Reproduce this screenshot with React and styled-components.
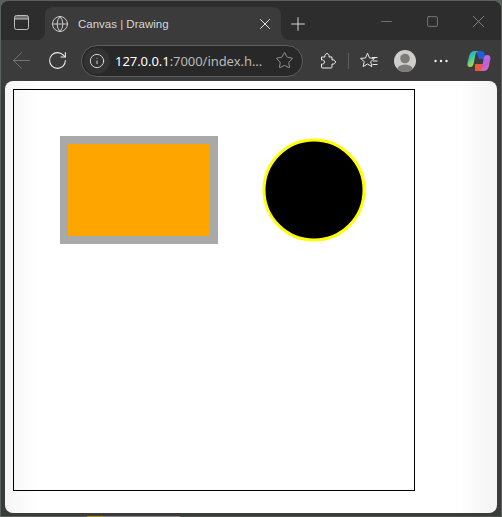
import React from "react"
import styled, { createGlobalStyle } from "styled-components"
import { ArrowLeft, Globe, Info, Minus, Plus, RotateCw, Square, Star, X } from "lucide-react"

const GlobalStyle = createGlobalStyle`
  html, body {
    margin: 0;
    background: #59635e;
  }
`

export default function App() {
  return (
    <Desktop>
      <GlobalStyle />
      <Win>
        <TabStrip>
          <LeftCap>
            <TabActionsIcon />
          </LeftCap>
          <Tab>
            <Globe size={18} strokeWidth={1.2} color="#d8d8d8" />
            <TabTitle>Canvas | Drawing</TabTitle>
            <X size={18} strokeWidth={1.3} color="#e8e8e8" />
          </Tab>
          <RightCap>
            <NewTab>
              <Plus size={22} strokeWidth={1} color="#e6e6e6" />
            </NewTab>
            <WinButtons>
              <WinButton>
                <Minus size={17} strokeWidth={1} color="#8d8d8d" />
              </WinButton>
              <WinButton>
                <Square size={13} strokeWidth={1.4} color="#8d8d8d" />
              </WinButton>
              <WinButton>
                <X size={21} strokeWidth={1} color="#8d8d8d" />
              </WinButton>
            </WinButtons>
          </RightCap>
        </TabStrip>

        <Toolbar>
          <ToolSlot>
            <ArrowLeft size={27} strokeWidth={0.8} color="#7b7b7b" />
          </ToolSlot>
          <ToolSlot>
            <RotateCw size={21} strokeWidth={1.2} color="#f0f0f0" />
          </ToolSlot>
          <Omnibox>
            <InfoBadge>
              <Info size={16} strokeWidth={1.4} color="#e0e0e0" />
            </InfoBadge>
            <Url>
              <Host>127.0.0.1</Host>:7000/index.h...
            </Url>
            <Star size={19} strokeWidth={0.9} color="#bcbcbc" />
          </Omnibox>
          <ExtensionSlot>
            <PuzzleIcon />
          </ExtensionSlot>
          <Divider />
          <ToolSlot>
            <FavouritesIcon />
          </ToolSlot>
          <ToolSlot>
            <ProfileIcon />
          </ToolSlot>
          <ToolSlot>
            <DotsIcon />
          </ToolSlot>
          <CopilotSlot>
            <CopilotIcon />
          </CopilotSlot>
        </Toolbar>

        <Page>
          <Canvas>
            <svg width="400" height="400" viewBox="0 0 400 400">
              <rect x="50" y="50" width="150" height="100" fill="orange" stroke="darkgray" strokeWidth="8" />
              <circle cx="300" cy="100" r="50" fill="black" stroke="yellow" strokeWidth="3" />
            </svg>
          </Canvas>
        </Page>
      </Win>
    </Desktop>
  )
}

function TabActionsIcon() {
  return (
    <svg width="15" height="15" viewBox="0 0 15 15" fill="none">
      <path d="M2.500.5h10a2 2 0 0 1 2 2v1.500H.5V2.500a2 2 0 0 1 2-2z" fill="#6f6f6f" />
      <rect x="0.5" y="0.5" width="14" height="14" rx="2" stroke="#bdbdbd" strokeWidth="1" />
      <path d="M.5 4h14" stroke="#bdbdbd" strokeWidth="1" />
    </svg>
  )
}

function PuzzleIcon() {
  return (
    <svg width="18" height="18" viewBox="0 0 18 18" fill="none" stroke="#ececec" strokeWidth="1">
      <path d="M2.500 5H6C5.500 3.500 6.500 1.500 8 1.500s2.500 2 2 3.500h3v3c1.500-.5 3.500.5 3.500 2s-2 2.500-3.500 2v3a1 1 0 0 1-1 1H3.500a1 1 0 0 1-1-1v-3c1.500.5 3-.5 3-2s-1.500-2.500-3-2z" />
    </svg>
  )
}

function FavouritesIcon() {
  return (
    <svg width="18" height="18" viewBox="0 0 18 18" fill="none" stroke="#e8e8e8" strokeWidth="1">
      <path d="M7.500 1.200 9.500 6l5 .4-3.800 3.300 1.200 4.900-4.400-2.600-4.400 2.600 1.200-4.900L.5 6.400l5-.4z" />
      <path d="M12 5.500h5.500M13 9h4.500M12.500 12.500h5" />
    </svg>
  )
}

function ProfileIcon() {
  return (
    <svg width="22" height="22" viewBox="0 0 22 22">
      <defs>
        <clipPath id="avatar">
          <circle cx="11" cy="11" r="11" />
        </clipPath>
      </defs>
      <g clipPath="url(#avatar)">
        <rect width="22" height="22" fill="#cfcdc9" />
        <circle cx="11" cy="8.500" r="4.800" fill="#7d7b78" />
        <ellipse cx="11" cy="20" rx="8" ry="5.500" fill="#7d7b78" />
      </g>
    </svg>
  )
}

function DotsIcon() {
  return (
    <svg width="14" height="4" viewBox="0 0 14 4" fill="#f0f0f0">
      <circle cx="1.500" cy="2" r="1.200" />
      <circle cx="7" cy="2" r="1.200" />
      <circle cx="12.500" cy="2" r="1.200" />
    </svg>
  )
}

function CopilotIcon() {
  return (
    <svg width="24" height="22" viewBox="0 0 24 22">
      <defs>
        <linearGradient id="copilotLeft" x1="0" y1="0" x2="0.6" y2="1">
          <stop offset="0" stopColor="#1f9ee8" />
          <stop offset="0.45" stopColor="#35c7a0" />
          <stop offset="1" stopColor="#e8d43a" />
        </linearGradient>
        <linearGradient id="copilotRight" x1="0.2" y1="0" x2="0.8" y2="1">
          <stop offset="0" stopColor="#d46ad8" />
          <stop offset="0.6" stopColor="#b65ee0" />
          <stop offset="1" stopColor="#f0709a" />
        </linearGradient>
      </defs>
      <path d="M9 1h5c2 0 3 1 3.500 3L19 9h-7z" fill="#1c5fd6" />
      <path d="M8 21h6c2 0 3-1 3.500-2.500L18 14H8z" fill="#f0563a" />
      <path d="M7.500 1h4.500C10 1 9 2.500 8.500 4.500L6.500 14c-.5 2-1.500 3-3.500 3-2 0-3-1.500-2.500-4l1.800-7.500C3.200 2.500 5 1 7.500 1z" fill="url(#copilotLeft)" />
      <path d="M16.500 21h-5c2 0 3-1.500 3.500-3.500L16.800 8c.5-2 1.700-3 3.400-3 2.300 0 3.600 1.500 3.200 4l-1.600 7.500C21 19.500 19 21 16.500 21z" fill="url(#copilotRight)" />
    </svg>
  )
}

const Desktop = styled.div`
  width: 502px;
  height: 517px;
  box-sizing: border-box;
  padding: 1px;
  overflow: hidden;
  background:
    linear-gradient(to right, #59635e 87px, #b8902e 87px, #b8902e 103px, #8a8a8a 103px, #8a8a8a 180px, #4a554f 180px) bottom / 100% 1px no-repeat,
    #59635e;
`

const Win = styled.div`
  height: 100%;
  display: flex;
  flex-direction: column;
  background: #3b3b3b;
  border-radius: 8px 8px 0 0;
  overflow: hidden;
`

const TabStrip = styled.div`
  height: 39px;
  flex: none;
  display: flex;
  background: linear-gradient(#2d2d2d 50%, #3b3b3b 50%);
`

const LeftCap = styled.div`
  width: 44px;
  flex: none;
  box-sizing: border-box;
  padding: 4px 4px 0 0;
  display: flex;
  align-items: center;
  justify-content: center;
  background: #2d2d2d;
  border-bottom-right-radius: 8px;
`

const Tab = styled.div`
  width: 236px;
  flex: none;
  box-sizing: border-box;
  margin-top: 6px;
  padding: 0 7px 0 6px;
  display: flex;
  align-items: center;
  background: #3b3b3b;
  border-radius: 8px 8px 0 0;
`

const TabTitle = styled.span`
  flex: 1;
  margin-left: 9px;
  color: #d6d6d6;
  font: 11.5px "Liberation Sans", sans-serif;
`

const RightCap = styled.div`
  flex: 1;
  box-sizing: border-box;
  padding-top: 6px;
  display: flex;
  align-items: center;
  background: #2d2d2d;
  border-bottom-left-radius: 8px;
`

const NewTab = styled.div`
  width: 34px;
  display: flex;
  justify-content: center;
`

const WinButtons = styled.div`
  margin-left: auto;
  display: flex;
  margin-top: -5px;
`

const WinButton = styled.div`
  width: 46px;
  height: 22px;
  display: flex;
  justify-content: center;
  align-items: center;
`

const Toolbar = styled.div`
  height: 41px;
  flex: none;
  display: flex;
  align-items: center;
  padding-left: 2px;
`

const ToolSlot = styled.div`
  width: 36px;
  height: 32px;
  flex: none;
  display: flex;
  align-items: center;
  justify-content: center;
`

const ExtensionSlot = styled(ToolSlot)`
  margin-left: 7px;
`

const CopilotSlot = styled(ToolSlot)`
  margin-left: 2px;
`

const Omnibox = styled.div`
  width: 222px;
  height: 32px;
  flex: none;
  box-sizing: border-box;
  margin-left: 6px;
  padding: 0 8px 0 2px;
  display: flex;
  align-items: center;
  background: #282828;
  border: 1px solid #5f5f5f;
  border-radius: 16px;
`

const InfoBadge = styled.div`
  width: 26px;
  height: 26px;
  flex: none;
  display: flex;
  align-items: center;
  justify-content: center;
  background: #333333;
  border-radius: 50%;
`

const Url = styled.div`
  flex: 1;
  margin-left: 5px;
  color: #b9b9b9;
  font: 13px "Noto Sans", sans-serif;
  letter-spacing: -0.05px;
  white-space: nowrap;
  overflow: hidden;
`

const Host = styled.span`
  color: #ffffff;
`

const Divider = styled.div`
  width: 1px;
  height: 16px;
  flex: none;
  margin: 0 2px;
  background: #5e5e5e;
`

const Page = styled.div`
  flex: 1;
  margin: 0 4px 3px 4px;
  padding: 8px;
  background: linear-gradient(to right, #f6f6f6, #ffffff 34px, #ffffff calc(100% - 38px), #f3f3f3);
  border-radius: 8px;
`

const Canvas = styled.div`
  width: 400px;
  height: 400px;
  border: 1px solid #000000;

  svg {
    display: block;
  }
`
